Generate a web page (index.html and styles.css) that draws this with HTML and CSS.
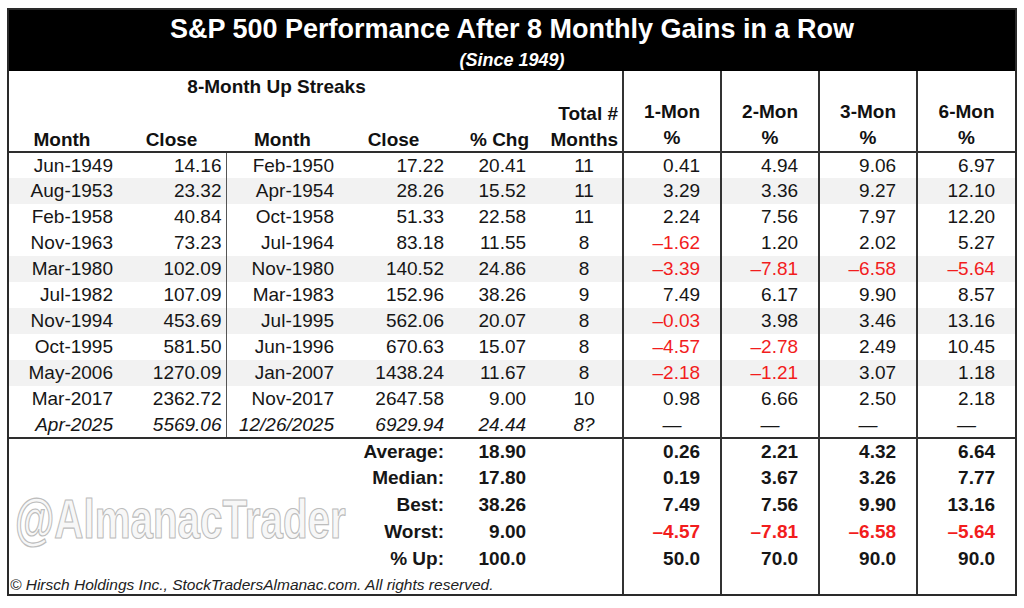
FILE: index.html
```html
<!DOCTYPE html>
<html lang="en">
<head>
<meta charset="utf-8">
<title>S&amp;P 500 Performance After 8 Monthly Gains in a Row</title>
<link rel="stylesheet" href="styles.css">
</head>
<body>
<div class="sheet">
  <div class="title-band">
    <h1 class="title">S&amp;P 500 Performance After 8 Monthly Gains in a Row</h1>
    <p class="subtitle">(Since 1949)</p>
  </div>
  <table class="grid">
    <colgroup>
      <col class="w-a"><col class="w-b"><col class="w-c"><col class="w-d"><col class="w-e">
      <col class="w-f"><col class="w-g"><col class="w-g"><col class="w-g"><col class="w-j">
    </colgroup>
    <thead>
      <tr class="hrow">
        <th colspan="5" class="streak">8-Month Up Streaks</th>
        <th class="h-f"></th>
        <th rowspan="3" class="pct-h">1-Mon<br>%</th>
        <th rowspan="3" class="pct-h">2-Mon<br>%</th>
        <th rowspan="3" class="pct-h">3-Mon<br>%</th>
        <th rowspan="3" class="pct-h">6-Mon<br>%</th>
      </tr>
      <tr class="hrow">
        <th colspan="5"></th>
        <th class="h-f">Total #</th>
      </tr>
      <tr class="hrow last">
        <th class="h-a">Month</th>
        <th class="h-b">Close</th>
        <th class="h-c">Month</th>
        <th class="h-d">Close</th>
        <th class="h-e">% Chg</th>
        <th class="h-f">Months</th>
      </tr>
    </thead>
    <tbody class="data">
      <tr><td>Jun-1949</td><td>14.16</td><td>Feb-1950</td><td>17.22</td><td>20.41</td><td>11</td><td>0.41</td><td>4.94</td><td>9.06</td><td>6.97</td></tr>
      <tr class="shade"><td>Aug-1953</td><td>23.32</td><td>Apr-1954</td><td>28.26</td><td>15.52</td><td>11</td><td>3.29</td><td>3.36</td><td>9.27</td><td>12.10</td></tr>
      <tr><td>Feb-1958</td><td>40.84</td><td>Oct-1958</td><td>51.33</td><td>22.58</td><td>11</td><td>2.24</td><td>7.56</td><td>7.97</td><td>12.20</td></tr>
      <tr><td>Nov-1963</td><td>73.23</td><td>Jul-1964</td><td>83.18</td><td>11.55</td><td>8</td><td class="neg">–1.62</td><td>1.20</td><td>2.02</td><td>5.27</td></tr>
      <tr class="shade"><td>Mar-1980</td><td>102.09</td><td>Nov-1980</td><td>140.52</td><td>24.86</td><td>8</td><td class="neg">–3.39</td><td class="neg">–7.81</td><td class="neg">–6.58</td><td class="neg">–5.64</td></tr>
      <tr><td>Jul-1982</td><td>107.09</td><td>Mar-1983</td><td>152.96</td><td>38.26</td><td>9</td><td>7.49</td><td>6.17</td><td>9.90</td><td>8.57</td></tr>
      <tr class="shade"><td>Nov-1994</td><td>453.69</td><td>Jul-1995</td><td>562.06</td><td>20.07</td><td>8</td><td class="neg">–0.03</td><td>3.98</td><td>3.46</td><td>13.16</td></tr>
      <tr><td>Oct-1995</td><td>581.50</td><td>Jun-1996</td><td>670.63</td><td>15.07</td><td>8</td><td class="neg">–4.57</td><td class="neg">–2.78</td><td>2.49</td><td>10.45</td></tr>
      <tr class="shade"><td>May-2006</td><td>1270.09</td><td>Jan-2007</td><td>1438.24</td><td>11.67</td><td>8</td><td class="neg">–2.18</td><td class="neg">–1.21</td><td>3.07</td><td>1.18</td></tr>
      <tr><td>Mar-2017</td><td>2362.72</td><td>Nov-2017</td><td>2647.58</td><td>9.00</td><td>10</td><td>0.98</td><td>6.66</td><td>2.50</td><td>2.18</td></tr>
      <tr class="current"><td>Apr-2025</td><td>5569.06</td><td>12/26/2025</td><td>6929.94</td><td>24.44</td><td>8?</td><td class="dash">—</td><td class="dash">—</td><td class="dash">—</td><td class="dash">—</td></tr>
    </tbody>
    <tbody class="stats">
      <tr><td colspan="4" class="label">Average:</td><td class="val">18.90</td><td></td><td>0.26</td><td>2.21</td><td>4.32</td><td>6.64</td></tr>
      <tr><td colspan="4" class="label">Median:</td><td class="val">17.80</td><td></td><td>0.19</td><td>3.67</td><td>3.26</td><td>7.77</td></tr>
      <tr><td colspan="4" class="label">Best:</td><td class="val">38.26</td><td></td><td>7.49</td><td>7.56</td><td>9.90</td><td>13.16</td></tr>
      <tr><td colspan="4" class="label">Worst:</td><td class="val">9.00</td><td></td><td class="neg">–4.57</td><td class="neg">–7.81</td><td class="neg">–6.58</td><td class="neg">–5.64</td></tr>
      <tr><td colspan="4" class="label">% Up:</td><td class="val">100.0</td><td></td><td>50.0</td><td>70.0</td><td>90.0</td><td>90.0</td></tr>
      <tr class="foot"><td colspan="6" class="credit">© Hirsch Holdings Inc., StockTradersAlmanac.com. All rights reserved.</td><td></td><td></td><td></td><td></td></tr>
    </tbody>
  </table>
  <div class="watermark">@AlmanacTrader</div>
</div>
</body>
</html>
```

FILE: styles.css
```css
* { box-sizing: border-box; }

html, body {
  margin: 0;
  padding: 0;
  background: #ffffff;
}

body {
  font-family: "Liberation Sans", Arial, sans-serif;
  color: #161616;
}

.sheet {
  position: relative;
  width: 1010px;
  margin: 8px 0 0 7px;
  border: 2px solid #2a2a2a;
  background: #fff;
}

.title-band {
  background: #000;
  color: #fff;
  text-align: center;
  height: 61px;
  padding-top: 4px;
}

.title {
  margin: 0;
  font-size: 27px;
  line-height: 30px;
  font-weight: bold;
}

.subtitle {
  margin: 6px 0 0;
  font-size: 18px;
  line-height: 20px;
  font-weight: bold;
  font-style: italic;
}

.grid {
  width: 1006px;
  table-layout: fixed;
  border-collapse: collapse;
  font-size: 19px;
}

.w-a { width: 116px; }
.w-b { width: 101px; }
.w-c { width: 118px; }
.w-d { width: 105px; }
.w-e { width: 85px; }
.w-f { width: 89px; }
.w-g { width: 98px; }
.w-j { width: 98px; }

.grid th,
.grid td {
  padding: 0;
  white-space: nowrap;
}

/* header */
.hrow th {
  height: 27px;
  line-height: 22px;
  vertical-align: bottom;
  font-weight: bold;
  color: #111;
}

.streak {
  text-align: center;
  padding-left: 10px !important;
}

.pct-h {
  text-align: center;
  line-height: 26px !important;
  border-left: 2px solid #333;
  padding-bottom: 0 !important;
}

.h-a { text-align: center; padding-right: 10px !important; }
.h-b { text-align: center; padding-right: 8px !important; }
.h-c { text-align: center; padding-right: 5px !important; }
.h-d { text-align: center; padding-right: 6px !important; }
.h-e { text-align: right; padding-right: 5px !important; }
.h-f { text-align: right; padding-right: 4px !important; }

/* data */
.data tr:first-child td,
.stats tr:first-child td {
  border-top: 2px solid #2e2e2e;
}

.data td {
  height: 26px;
  line-height: 24px;
  vertical-align: middle;
}

.data tr.shade td { background: #f2f2f2; }

.data td:nth-child(1) { text-align: right; padding-right: 12px; }
.data td:nth-child(2) { text-align: right; padding-right: 4px; }
.data td:nth-child(3) { text-align: right; padding-right: 10px; border-left: 1px solid #555; }
.data td:nth-child(4) { text-align: right; padding-right: 5px; }
.data td:nth-child(5) { text-align: right; padding-right: 8px; }
.data td:nth-child(6) { text-align: center; padding-left: 12px; }
.data td:nth-child(n+7) { text-align: right; padding-right: 20px; border-left: 2px solid #333; }

.data tr.current td { font-style: italic; }
.data td.dash { text-align: center; padding-right: 0; font-style: normal; }

.neg { color: #f21d1d; }

/* stats */
.stats td {
  height: 27px;
  line-height: 22px;
  vertical-align: top;
  padding-top: 2px;
  font-weight: bold;
  text-align: right;
}

.stats td.label { padding-right: 5px; position: relative; z-index: 1; }
.stats td.val { padding-right: 8px; }
.stats td:nth-last-child(-n+4) { padding-right: 20px; border-left: 2px solid #333; }

.stats tr.foot td {
  height: 21px;
  padding-top: 0;
  vertical-align: bottom;
  line-height: 19px;
}

.stats td.credit {
  text-align: left;
  font-weight: normal;
  font-style: italic;
  font-size: 15.5px;
  padding-left: 1px;
  color: #222;
}

/* watermark overlay */
.watermark {
  position: absolute;
  left: 6px;
  top: 480px;
  font-size: 64px;
  line-height: 64px;
  font-weight: bold;
  color: #f7f7f7;
  -webkit-text-stroke: 1.4px #bdbdbd;
  text-shadow: 0 0 1px #d0d0d0;
  transform: scale(0.63, 0.88);
  transform-origin: left top;
  pointer-events: none;
}
```
